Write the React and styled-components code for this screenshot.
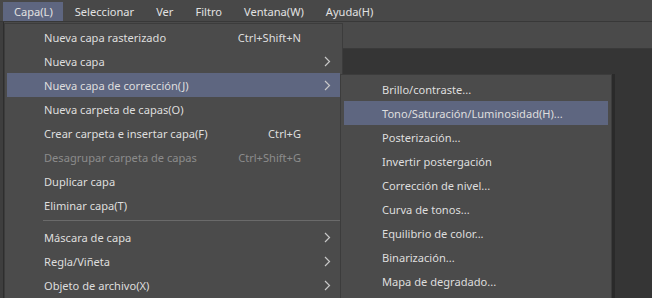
import styled, { createGlobalStyle } from "styled-components";

const GlobalStyle = createGlobalStyle`
    html, body {
        margin: 0;
        padding: 0;
        background: #363636;
        overflow: hidden;
    }
    body {
        font-family: "Noto Sans", "Open Sans", sans-serif;
        font-size: 11.1px;
        color: #dcdcdc;
    }
`

const topItems = ["Capa(L)", "Seleccionar", "Ver", "Filtro", "Ventana(W)", "Ayuda(H)"]

const layerMenu = [
    { label: "Nueva capa rasterizado", shortcut: "Ctrl+Shift+N" },
    { label: "Nueva capa", sub: true },
    { label: "Nueva capa de corrección(J)", sub: true, active: true },
    { label: "Nueva carpeta de capas(O)" },
    { label: "Crear carpeta e insertar capa(F)", shortcut: "Ctrl+G" },
    { label: "Desagrupar carpeta de capas", shortcut: "Ctrl+Shift+G", disabled: true },
    { label: "Duplicar capa" },
    { label: "Eliminar capa(T)" },
    { separator: true },
    { label: "Máscara de capa", sub: true },
    { label: "Regla/Viñeta", sub: true },
    { label: "Objeto de archivo(X)", sub: true },
]

const correctionMenu = [
    "Brillo/contraste...",
    "Tono/Saturación/Luminosidad(H)...",
    "Posterización...",
    "Invertir postergación",
    "Corrección de nivel...",
    "Curva de tonos...",
    "Equilibrio de color...",
    "Binarización...",
    "Mapa de degradado...",
]

function Chevron() {
    return (
        <svg width="7" height="11" viewBox="0 0 7 11">
            <polyline points="1,1 5.5,5.5 1,10" fill="none" stroke="#c8c8c8" strokeWidth="1.2" />
        </svg>
    )
}

export default function App() {
    return (
        <Screen>
            <GlobalStyle />
            <MenuBar>
                {topItems.map((t, i) => (
                    <TopItem key={t} $open={i === 0}>{t}</TopItem>
                ))}
            </MenuBar>

            <Workspace>
                <SideStrip />
                <ToolRow />
                <Canvas />
            </Workspace>

            <MainMenu>
                {layerMenu.map((e, i) =>
                    e.separator ? (
                        <Separator key={i} />
                    ) : (
                        <Row key={e.label} $active={e.active} $disabled={e.disabled}>
                            <Label>{e.label}</Label>
                            <Shortcut>{e.shortcut}</Shortcut>
                            <Arrow>{e.sub && <Chevron />}</Arrow>
                        </Row>
                    )
                )}
            </MainMenu>

            <SubMenu>
                {correctionMenu.map((label, i) => (
                    <SubRow key={label} $active={i === 1}>{label}</SubRow>
                ))}
            </SubMenu>
        </Screen>
    )
}

const Screen = styled.div`
    position: relative;
    width: 652px;
    height: 298px;
    overflow: hidden;
    background: #363636;
`

const MenuBar = styled.div`
    display: flex;
    align-items: center;
    gap: 1px;
    height: 22px;
    padding-left: 3px;
    background: #484848;
    border-bottom: 1px solid #383838;
    box-sizing: border-box;
`

const TopItem = styled.div`
    height: 19px;
    margin-top: 1px;
    padding: 0 10px 0 11px;
    display: flex;
    align-items: center;
    color: #e2e2e2;
    background: ${(p) => (p.$open ? "#5e6680" : "transparent")};
`

const Workspace = styled.div`
    display: grid;
    grid-template-columns: 4px 1fr;
    grid-template-rows: 27px 1fr;
    height: 276px;
`

const SideStrip = styled.div`
    grid-row: 1 / 3;
    background: #3e3e3e;
    border-right: 1px solid #2e2e2e;
`

const ToolRow = styled.div`
    background: #4a4a4a;
    border-bottom: 1px solid #3a3a3a;
`

const Canvas = styled.div`
    background: #353535;
`

const MainMenu = styled.div`
    position: absolute;
    left: 4px;
    top: 23px;
    width: 339px;
    height: 290px;
    padding: 1px 2px 0 2px;
    box-sizing: border-box;
    background: #4b4b4b;
    border: 1px solid #3c3c3c;
`

const Row = styled.div`
    display: grid;
    grid-template-columns: 1fr 92px 39px;
    align-items: center;
    height: 24px;
    padding-left: 37px;
    color: ${(p) => (p.$disabled ? "#8c8c8c" : "#dedede")};
    background: ${(p) => (p.$active ? "#5e6680" : "transparent")};
`

const Label = styled.span`
    white-space: nowrap;
`

const Shortcut = styled.span`
    text-align: right;
    white-space: nowrap;
`

const Arrow = styled.span`
    display: flex;
    justify-content: flex-end;
    padding-right: 9px;
`

const Separator = styled.div`
    height: 1px;
    margin: 3px 0 4px 36px;
    background: #6a6a6a;
`

const SubMenu = styled.div`
    position: absolute;
    left: 340px;
    top: 74px;
    width: 272px;
    height: 230px;
    padding: 2px 3px 0 3px;
    box-sizing: border-box;
    background: #4b4b4b;
    border: 1px solid #3c3c3c;
    box-shadow: 3px 0 0 #2a2a2a;
`

const SubRow = styled.div`
    display: flex;
    align-items: center;
    height: 24px;
    padding-left: 38px;
    color: #dedede;
    white-space: nowrap;
    background: ${(p) => (p.$active ? "#5e6680" : "transparent")};
`
